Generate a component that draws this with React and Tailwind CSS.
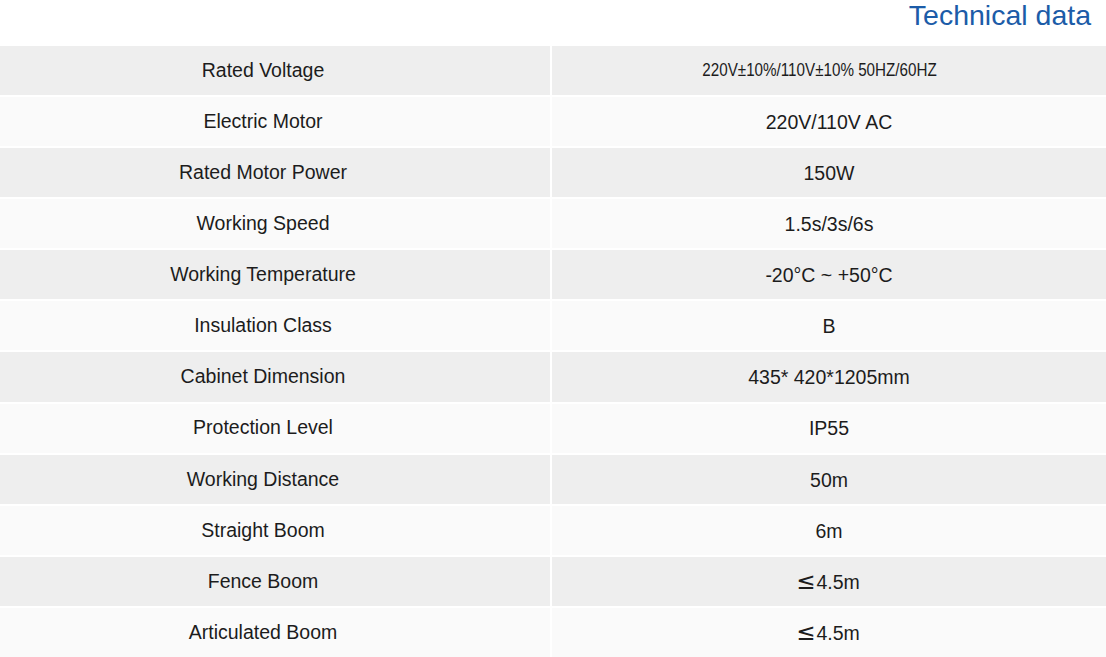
import React from "react";

const rows = [
  ["Rated Voltage", "220V±10%/110V±10% 50HZ/60HZ"],
  ["Electric Motor", "220V/110V AC"],
  ["Rated Motor Power", "150W"],
  ["Working Speed", "1.5s/3s/6s"],
  ["Working Temperature", "-20°C ~ +50°C"],
  ["Insulation Class", "B"],
  ["Cabinet Dimension", "435* 420*1205mm"],
  ["Protection Level", "IP55"],
  ["Working Distance", "50m"],
  ["Straight Boom", "6m"],
  ["Fence Boom", "≤4.5m"],
  ["Articulated Boom", "≤4.5m"],
];

function Value({ v, i }) {
  if (i === 0) {
    return (
      <span className="inline-block text-[19px] scale-x-[0.8] -translate-x-[9px] -translate-y-[1px]">{v}</span>
    );
  }
  if (v.startsWith("≤")) {
    return (
      <span className="flex items-baseline -translate-x-[1px]">
        <span
          className="text-[23px] leading-none mr-[1px]"
          style={{ fontFamily: '"DejaVu Sans", sans-serif' }}
        >
          ≤
        </span>
        {v.slice(1)}
      </span>
    );
  }
  return v;
}

export default function App() {
  return (
    <div
      className="w-[1106px] h-[657px] bg-white flex flex-col overflow-hidden text-[#1c1c1c]"
      style={{ fontFamily: '"Liberation Sans", Arial, sans-serif' }}
    >
      <div className="h-[46px] flex items-start justify-end pr-[15px]">
        <span className="text-[28.5px] leading-[30px] text-[#1c5ca8]">Technical data</span>
      </div>
      <div className="flex-1 flex flex-col gap-[2px]">
        {rows.map(([k, v], i) => (
          <div
            key={k}
            className={`flex-1 flex gap-[2px] text-[19.5px] ${i % 2 === 0 ? "bg-[#eeeeee]" : "bg-[#fafafa]"}`}
          >
            <div className="w-[548px] flex items-center justify-center pr-[22px]">{k}</div>
            <div className="w-[2px] bg-white" />
            <div className="flex-1 flex items-center justify-center -ml-[2px] pt-[2px]">
              <Value v={v} i={i} />
            </div>
          </div>
        ))}
      </div>
    </div>
  );
}
